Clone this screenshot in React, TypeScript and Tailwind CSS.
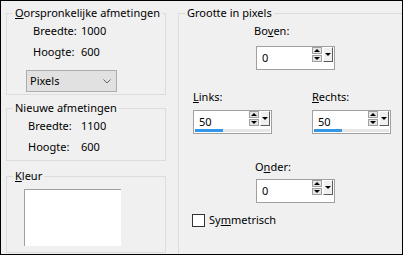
import type { ReactNode } from 'react'

function Legend({ children }: { children: ReactNode }) {
  return <legend className="ml-[6px] whitespace-nowrap px-[2px] leading-[16px]">{children}</legend>
}

function Row({ label, value, labelW }: { label: string; value: string; labelW: string }) {
  return (
    <div className="flex h-[21px] items-center whitespace-nowrap">
      <span className={labelW}>{label}</span>
      <span>{value}</span>
    </div>
  )
}

function SpinBox({ value, bar }: { value: string; bar?: boolean }) {
  return (
    <div className="relative h-[24px] w-[79px] border border-[#a0a0a0] bg-white">
      <span className="absolute left-[5px] top-[3px] leading-[16px]">{value}</span>
      <div className="absolute left-[55px] top-0 flex flex-col gap-px">
        <div className="flex h-[7px] w-[10px] items-center justify-center border border-[#a0a0a0] bg-[#e5e5e5]">
          <div className="h-0 w-0 border-x-[3px] border-b-[3px] border-x-transparent border-b-black" />
        </div>
        <div className="flex h-[7px] w-[10px] items-center justify-center border border-[#a0a0a0] bg-[#e5e5e5]">
          <div className="h-0 w-0 border-x-[3px] border-t-[3px] border-x-transparent border-t-black" />
        </div>
      </div>
      <div className="absolute left-[66px] top-0 flex h-[15px] w-[10px] items-center justify-center border-b border-l border-r border-t border-b-[#5a5a5a] border-l-white border-r-[#5a5a5a] border-t-white bg-[#f0f0f0]">
        <div className="h-0 w-0 border-x-[3px] border-t-[3px] border-x-transparent border-t-black" />
      </div>
      {bar && (
        <div className="absolute bottom-[1px] left-[1px] h-[3px] w-[75px] bg-[#e6e6e6]">
          <div className="h-full w-[28px] bg-[#3297e8]" />
        </div>
      )}
    </div>
  )
}

export default function App() {
  return (
    <div
      className="flex h-[255px] w-[403px] gap-[12px] overflow-hidden border border-black bg-[#f0f0f0] pl-[5px] pt-[4px] text-[11px] text-black"
      style={{ fontFamily: '"Noto Sans", "Open Sans", sans-serif' }}
    >
      <div className="flex w-[160px] shrink-0 flex-col">
        <fieldset className="h-[90px] border border-[#dcdcdc]">
          <Legend>
            <u>O</u>orspronkelijke afmetingen
          </Legend>
          <div className="pl-[26px]">
            <Row label="Breedte:" value="1000" labelW="w-[48px]" />
            <Row label="Hoogte:" value="600" labelW="w-[48px]" />
          </div>
          <div className="ml-[19px] mt-[7px] flex h-[22px] w-[91px] items-center justify-between border border-[#adadad] bg-[#e1e1e1] pl-[3px] pr-[5px]">
            <span>Pixels</span>
            <svg width="8" height="5" viewBox="0 0 8 5">
              <path d="M0.5 0.5 L4 4 L7.5 0.5" fill="none" stroke="#606060" strokeWidth="1" />
            </svg>
          </div>
        </fieldset>

        <fieldset className="mt-[5px] h-[61px] border border-[#dcdcdc]">
          <Legend>Nieuwe afmetingen</Legend>
          <div className="pl-[21px]">
            <Row label="Breedte:" value="1100" labelW="w-[53px]" />
            <Row label="Hoogte:" value="600" labelW="w-[53px]" />
          </div>
        </fieldset>

        <fieldset className="mt-[7px] h-[85px] border border-[#dcdcdc]">
          <Legend>
            <u>K</u>leur
          </Legend>
          <div className="ml-[17px] mt-[5px] h-[57px] w-[97px] border-l border-t border-[#a0a0a0] bg-white" />
        </fieldset>
      </div>

      <fieldset className="flex-1 border border-b-0 border-r-0 border-[#dcdcdc]">
        <Legend>Grootte in pixels</Legend>
        <div className="ml-[75px] flex h-[20px] items-center">
          Bo<u>v</u>en:
        </div>
        <div className="ml-[77px] mt-[5px]">
          <SpinBox value="0" />
        </div>

        <div className="ml-[14px] mt-[17px] flex gap-[40px]">
          <div className="w-[79px]">
            <div className="flex h-[20px] items-center">
              <u>L</u>inks:
            </div>
            <div className="mt-[3px]">
              <SpinBox value="50" bar />
            </div>
          </div>
          <div className="w-[79px]">
            <div className="flex h-[20px] items-center">
              <u>R</u>echts:
            </div>
            <div className="mt-[3px]">
              <SpinBox value="50" bar />
            </div>
          </div>
        </div>

        <div className="ml-[76px] mt-[23px] flex h-[20px] items-center">
          O<u>n</u>der:
        </div>
        <div className="ml-[77px] mt-[2px]">
          <SpinBox value="0" />
        </div>

        <label className="ml-[13px] mt-[9px] flex items-center gap-[4px]">
          <span className="h-[13px] w-[13px] border border-[#333] bg-white" />
          <span>
            Sy<u>m</u>metrisch
          </span>
        </label>
      </fieldset>
    </div>
  )
}
